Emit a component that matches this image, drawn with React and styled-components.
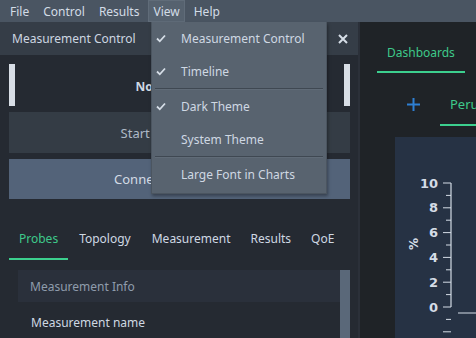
import React from 'react';
import styled, { createGlobalStyle } from 'styled-components';

const GlobalStyle = createGlobalStyle`
  html, body {
    margin: 0;
    padding: 0;
    background: #1f2327;
    overflow: hidden;
  }
  body {
    font-family: 'Noto Sans', 'Open Sans', sans-serif;
    font-size: 12px;
    color: #cfd8e3;
  }
`;

const Window = styled.div`
  position: relative;
  width: 476px;
  height: 338px;
  display: flex;
  flex-direction: column;
  overflow: hidden;
`;

const MenuBar = styled.div`
  height: 22px;
  display: flex;
  align-items: stretch;
  background: #4a5562;
  padding-left: 3px;
  flex-shrink: 0;
`;

const MenuItem = styled.div`
  display: flex;
  align-items: center;
  padding: 0 ${({ $open }) => ($open ? 5 : 7)}px;
  margin: 0 ${({ $open }) => ($open ? 2 : 0)}px;
  color: #d3dce6;
  background: ${({ $open }) => ($open ? '#56626f' : 'transparent')};
  box-shadow: ${({ $open }) => ($open ? 'inset 0 0 0 1px #606c79' : 'none')};
`;

const Body = styled.div`
  flex: 1;
  display: flex;
  min-height: 0;
`;

const Dock = styled.div`
  width: 358px;
  display: flex;
  flex-direction: column;
  background: #252a32;
  border-right: 2px solid #2b3039;
  flex-shrink: 0;
`;

const DockTitle = styled.div`
  height: 33px;
  display: flex;
  align-items: center;
  justify-content: space-between;
  padding: 0 10px 0 12px;
  background: #353d47;
  color: #cdd6e1;
`;

const TitleButtons = styled.div`
  display: flex;
  align-items: center;
  gap: 12px;
`;

const DockContent = styled.div`
  flex: 1;
  display: flex;
  flex-direction: column;
  padding: 9px 8px 0 9px;
  min-height: 0;
`;

const StatusRow = styled.div`
  height: 42px;
  display: flex;
  align-items: center;
  justify-content: space-between;
`;

const StatusBar = styled.div`
  width: 6px;
  align-self: stretch;
  background: #d8dee6;
`;

const StatusText = styled.div`
  font-weight: 700;
  color: #cfd8e3;
  padding-top: 3px;
`;

const Button = styled.div`
  height: ${({ $h }) => $h}px;
  margin-top: 6px;
  display: flex;
  align-items: center;
  justify-content: center;
  background: ${({ $primary }) => ($primary ? '#536379' : '#343c45')};
  color: ${({ $primary }) => ($primary ? '#d3dbe5' : '#aeb9c6')};
  font-size: 13px;
`;

const TabBar = styled.div`
  display: flex;
  margin-top: 23px;
  height: 38px;
`;

const Tab = styled.div`
  display: flex;
  align-items: center;
  padding: 0 10px 4px;
  font-size: 12px;
  color: ${({ $active }) => ($active ? '#3ec98a' : '#cfd8e3')};
  border-bottom: 2px solid ${({ $active }) => ($active ? '#3ccf8e' : 'transparent')};
  white-space: nowrap;
  margin-right: ${({ $gap }) => $gap || 0}px;
`;

const ScrollArea = styled.div`
  flex: 1;
  display: flex;
  margin-top: 10px;
  padding-left: 9px;
  min-height: 0;
`;

const GroupBox = styled.div`
  flex: 1;
  display: flex;
  flex-direction: column;
`;

const GroupHeader = styled.div`
  height: 32px;
  display: flex;
  align-items: center;
  padding-left: 12px;
  background: #2a303b;
  color: #8f9cac;
`;

const FieldLabel = styled.div`
  padding: 12px 0 0 13px;
  color: #cfd8e3;
`;

const ScrollBar = styled.div`
  width: 10px;
  background: #5a6879;
`;

const Main = styled.div`
  flex: 1;
  display: flex;
  flex-direction: column;
  background: #1f2327;
  min-width: 0;
`;

const MainTabs = styled.div`
  display: flex;
  padding: 11px 0 0 17px;
`;

const MainTab = styled.div`
  height: 38px;
  padding: 0 10px;
  display: flex;
  align-items: center;
  color: #3ec98a;
  border-bottom: 2px solid #3ccf8e;
  white-space: nowrap;
`;

const DashTabs = styled.div`
  display: flex;
  align-items: stretch;
  margin-top: 12px;
  padding-left: 47px;
  height: 41px;
`;

const AddButton = styled.div`
  width: 14px;
  display: flex;
  align-items: center;
  justify-content: center;
  margin-right: 20px;
  padding-bottom: 2px;
`;

const DashTab = styled.div`
  padding: 0 10px 2px;
  display: flex;
  align-items: center;
  color: #3ec98a;
  font-size: 13px;
  border-bottom: 2px solid #3ccf8e;
  white-space: nowrap;
`;

const ChartArea = styled.div`
  flex: 1;
  margin: 11px 0 0 35px;
  background: #263244;
  overflow: hidden;
`;

const Dropdown = styled.div`
  position: absolute;
  top: 22px;
  left: 151px;
  width: 174px;
  padding: 0 0 2px;
  background: #58636f;
  border: 1px solid #4b5560;
  border-top: none;
  box-shadow: 1px 2px 3px rgba(0, 0, 0, 0.35);
  display: flex;
  flex-direction: column;
`;

const DropItem = styled.div`
  height: 33px;
  display: flex;
  align-items: center;
  color: #cfd8e3;
  font-size: 12px;
`;

const CheckCell = styled.div`
  width: 29px;
  display: flex;
  justify-content: flex-start;
  padding-left: 4px;
  box-sizing: border-box;
`;

const Separator = styled.div`
  height: 1px;
  margin: 0 3px;
  background: #3f4852;
  border-bottom: 1px solid #606b77;
`;

const Check = () => (
  <svg width="10" height="9" viewBox="0 0 10 9">
    <path d="M1 4.5 L3.8 7.3 L9 1.5" stroke="#d6dee7" strokeWidth="1.8" fill="none" />
  </svg>
);

const Close = () => (
  <svg width="10" height="10" viewBox="0 0 10 10">
    <path d="M1 1 L9 9 M9 1 L1 9" stroke="#d6dee7" strokeWidth="2" />
  </svg>
);

const Plus = () => (
  <svg width="13" height="13" viewBox="0 0 13 13">
    <path d="M6.5 0 V13 M0 6.5 H13" stroke="#2e7fd2" strokeWidth="2" />
  </svg>
);

const Axis = () => {
  const labels = [10, 8, 6, 4, 2, 0];
  const top = 46;
  const step = 24.8;
  const ticks = [];
  for (let i = 0; i <= 20; i++) {
    const y = top + (i * step) / 2;
    ticks.push(
      <line key={i} x1={i % 2 === 0 ? 48 : 51} x2="56" y1={y} y2={y} stroke="#d4dce6" strokeWidth="1" />
    );
  }
  return (
    <svg width="81" height="202" viewBox="0 0 81 202">
      <line x1="56" x2="56" y1={top} y2={top + step * 5} stroke="#d4dce6" strokeWidth="1.2" />
      {ticks}
      {labels.map((l, i) => (
        <text
          key={l}
          x="43"
          y={top + i * step + 4.5}
          textAnchor="end"
          fill="#d4dce6"
          fontSize="13"
          fontWeight="700"
          fontFamily="'DejaVu Sans', sans-serif"
        >
          {l}
        </text>
      ))}
      <text
        x="19"
        y="107"
        fill="#d4dce6"
        fontSize="12"
        fontWeight="700"
        fontFamily="'DejaVu Sans', sans-serif"
        textAnchor="middle"
        transform="rotate(-90 19 107)"
        dominantBaseline="middle"
      >
        %
      </text>
      <line x1="63" x2="81" y1="176" y2="176" stroke="#d4dce6" strokeWidth="1" />
    </svg>
  );
};

const viewItems = [
  { label: 'Measurement Control', checked: true },
  { label: 'Timeline', checked: true },
  { sep: true },
  { label: 'Dark Theme', checked: true },
  { label: 'System Theme' },
  { sep: true },
  { label: 'Large Font in Charts' },
];

const App = () => {
  return (
    <Window>
      <GlobalStyle />
      <MenuBar>
        <MenuItem>File</MenuItem>
        <MenuItem>Control</MenuItem>
        <MenuItem>Results</MenuItem>
        <MenuItem $open>View</MenuItem>
        <MenuItem>Help</MenuItem>
      </MenuBar>

      <Body>
        <Dock>
          <DockTitle>
            <span>Measurement Control</span>
            <TitleButtons>
              <svg width="8" height="10" viewBox="0 0 8 10">
                <rect x="0.5" y="0.5" width="7" height="9" fill="none" stroke="#c5ced8" />
              </svg>
              <Close />
            </TitleButtons>
          </DockTitle>

          <DockContent>
            <StatusRow>
              <StatusBar />
              <StatusText>Not connected</StatusText>
              <StatusBar />
            </StatusRow>
            <Button $h={41}>Start Measurement</Button>
            <Button $h={40} $primary>Connect to Controller</Button>

            <TabBar>
              <Tab $active $gap={1}>Probes</Tab>
              <Tab $gap={1}>Topology</Tab>
              <Tab>Measurement</Tab>
              <Tab>Results</Tab>
              <Tab>QoE</Tab>
            </TabBar>

            <ScrollArea>
              <GroupBox>
                <GroupHeader>Measurement Info</GroupHeader>
                <FieldLabel>Measurement name</FieldLabel>
              </GroupBox>
              <ScrollBar />
            </ScrollArea>
          </DockContent>
        </Dock>

        <Main>
          <MainTabs>
            <MainTab>Dashboards</MainTab>
          </MainTabs>
          <DashTabs>
            <AddButton>
              <Plus />
            </AddButton>
            <DashTab>Peru</DashTab>
          </DashTabs>
          <ChartArea>
            <Axis />
          </ChartArea>
        </Main>
      </Body>

      <Dropdown>
        {viewItems.map((item, i) =>
          item.sep ? (
            <Separator key={i} />
          ) : (
            <DropItem key={i}>
              <CheckCell>{item.checked && <Check />}</CheckCell>
              {item.label}
            </DropItem>
          )
        )}
      </Dropdown>
    </Window>
  );
};

export default App;
